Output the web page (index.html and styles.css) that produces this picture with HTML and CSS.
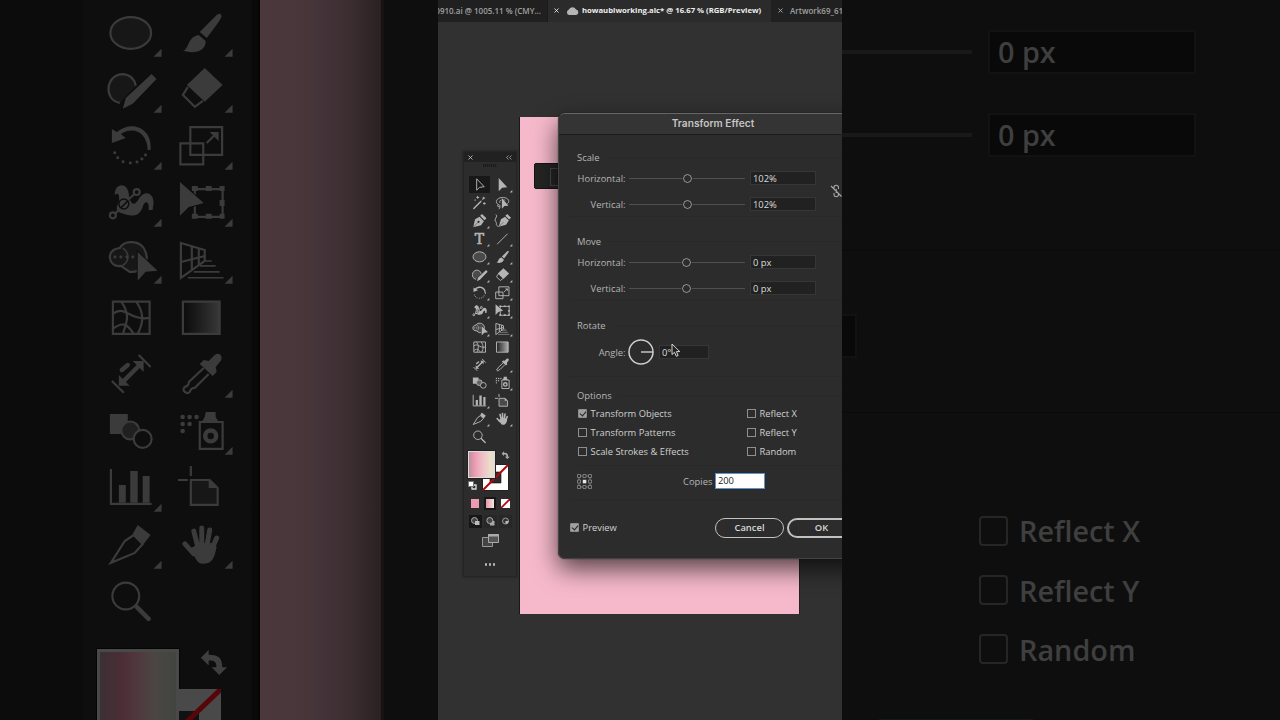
FILE: index.html
```
<!DOCTYPE html>
<html lang="en">
<head>
    <meta charset="UTF-8">
    <meta name="viewport" content="width=device-width, initial-scale=1.0">
    <title>Transform Effect</title>
    <link rel="stylesheet" href="styles.css">
</head>
<body>
    <!-- tool icons, shared by both toolbars -->
    <svg class="sprite" width="0" height="0">
        <defs>
            <linearGradient id="fade"><stop offset="0.1" stop-color="#000"/><stop offset="1" stop-color="#fff"/></linearGradient>
            <mask id="fadeMask"><rect x="16" y="11" width="40" height="36" fill="url(#fade)"/></mask>
        </defs>
        <symbol id="more" viewBox="0 0 72 57"><path class="f" d="M67 44v8h-8z"/></symbol>
        <symbol id="select" viewBox="0 0 72 57"><path class="s" d="M27 9v36l9-9 15-2z"/></symbol>
        <symbol id="direct" viewBox="0 0 72 57"><path class="f" d="M24 6v42l11-11 16-1z"/></symbol>
        <symbol id="wand" viewBox="0 0 72 57"><path class="s w" d="M18 46l22-22"/><path class="s" d="M30 6v9M26 11h9M49 9v8M45 13h9M51 26v8M47 30h9M22 17v5M43 20l3-3"/></symbol>
        <symbol id="lasso" viewBox="0 0 72 57"><path class="s" d="M24 34c-14-7-7-22 11-23 18-1 27 12 16 20M24 34c-5 0-6 7 0 6 6-1 4-6 0-6M28 39q2 6-4 8M28 28c-5-9 10-12 17-8"/><path class="f b" d="M34 13v34l8-9 13-1z"/></symbol>
        <symbol id="pen" viewBox="0 0 72 57"><path class="f" d="M16 48l6-25 14-8 14 14-9 13zM38 12l6-6 14 14-6 6z"/><path class="k" d="M17 47l15-15"/><circle class="bg" cx="33" cy="31" r="3.5"/></symbol>
        <symbol id="curve" viewBox="0 0 72 57"><path class="f" d="M24 47l7-24 13-8 12 12-9 13zM45 12l6-6 12 12-6 6z"/><path class="k" d="M25 46l14-14"/><path class="s" d="M15 8c8 6-8 15 0 23 5 6-4 10 9 15"/></symbol>
        <symbol id="line" viewBox="0 0 72 57"><path class="s" d="M19 45l33-33"/></symbol>
        <symbol id="ellipse" viewBox="0 0 72 57"><ellipse class="s t" cx="36" cy="28" rx="20.5" ry="16"/></symbol>
        <symbol id="brush" viewBox="0 0 72 57"><path class="f" d="M51 10q4-3 5 1q0 3-15 22l-7-6zM33 30l7 6c0 9-9 14-23 10 7-2 4-14 16-16z"/><path class="k" d="M32 27l10 9"/></symbol>
        <symbol id="blob" viewBox="0 0 72 57"><path class="s t" d="M25 42c-17-3-14-28 2-29 8 0 13 5 14 12"/><path class="f b" d="M57 13l5 5-24 25-10 5 3-11z"/></symbol>
        <symbol id="eraser" viewBox="0 0 72 57"><path class="f" d="M39 7l18 17-18 17-18-17z"/><path class="s" d="M22 26l-5 8 12 12 8-6"/></symbol>
        <symbol id="rotate" viewBox="0 0 72 57"><path class="f" d="M17 11v14l14-5-5-4c14-9 27 0 27 16h3c2-21-18-31-34-18z"/><path class="dots" d="M19.800 34.800h.1M22.800 39.800h.1M28.200 43.800h.1M35.500 45.200h.1M42.200 44.200h.1M47.200 41.200h.1M50.800 37.200h.1"/></symbol>
        <symbol id="scale" viewBox="0 0 72 57"><path class="s" d="M24.500 9h32v28h-32zM14.500 25.500h23v21h-23zM41 25l9-9"/><path class="f" d="M44 14h9v9z"/></symbol>
        <symbol id="width" viewBox="0 0 72 57"><path class="f" d="M20 20c-1-12 13-14 14-1 1 9 5 14 10 5 5-9 15-7 15 4l-1 7h-4c1-9-4-10-6-3-3 10-12 10-19 7-9-2-8-6-5-12 1-5 0-11-4-7z"/><path class="k" d="M19 40l23-23"/><path class="s" d="M19 40l7-7M32 26l10-9"/><circle class="s bgf" cx="18" cy="40.500" r="3"/><circle class="s bgf" cx="42" cy="17" r="3"/><circle class="k n" cx="29" cy="29" r="5"/></symbol>
        <symbol id="free" viewBox="0 0 72 57"><path class="s" d="M29 14h28v28H29z"/><path class="f" d="M26 11h6v5h-6zM40 11h6v5h-6zM54 11h5v5h-5zM54 25h5v6h-5zM54 39h5v5h-5zM40 39h6v5h-6zM26 39h6v5h-6z"/><path class="f b" d="M14 7v34l9-9 15-4z"/></symbol>
        <symbol id="builder" viewBox="0 0 72 57"><path class="s t" d="M25 16c5-9 22-8 26 4 4 12-5 21-16 20l-9-6c-13 2-16-17-1-18z"/><path class="s thin" d="M28 16c7 5 7 14-1 18"/><path class="dots" d="M20 25h.1M26 25h.1M32 25h.1M38 25h.1"/><path class="f b" d="M43 20v29l8-9 12-1z"/></symbol>
        <symbol id="persp" viewBox="0 0 72 57"><path class="s" d="M15 11l24 7v11L15 46zM15 30l24-6M26 14v24M33 16v17"/><path class="s thin" d="M38 29h8M34 34h16M28 40h26M22 46h36"/></symbol>
        <symbol id="mesh" viewBox="0 0 72 57"><path class="s" d="M18 12.500h37V45H18zM18 25c12-10 16 7 37 4M18 40c9-7 14-6 21 5M26 12c9 12 7 20 2 33M41 12c8 10 8 22 2 33"/></symbol>
        <symbol id="grad" viewBox="0 0 72 57"><rect class="f" x="17" y="12.500" width="37" height="32.500" mask="url(#fadeMask)"/><path class="s" d="M17 12.500h37V45H17z"/></symbol>
        <symbol id="measure" viewBox="0 0 72 57"><path class="s" d="M17 35l12 12M44 9l12 12"/><path class="s w" d="M27 37l19-19"/><path class="s w" d="M27 24l6-5"/><path class="f" d="M24 29v11h11zM38 15h11v11z"/></symbol>
        <symbol id="dropper" viewBox="0 0 72 57"><path class="f" d="M34 18l4-4 5 1 6-6c5-4 9 2 6 6l-5 6 1 5-4 4z"/><path class="s" d="M38 22L23 36q0 4-4 5c-4 4 2 8 5 5q1-4 5-4l14-14"/></symbol>
        <symbol id="blend" viewBox="0 0 72 57"><path class="f" d="M15 11h18v20H15z"/><circle class="s bgf" cx="35.500" cy="27.500" r="9"/><circle class="f h" cx="35.500" cy="27.500" r="9"/><circle class="s bgf" cx="48" cy="36" r="9"/></symbol>
        <symbol id="spray" viewBox="0 0 72 57"><path class="s" d="M34 19h23v27H34z"/><circle class="s w" cx="45" cy="33" r="5.500"/><path class="f" d="M40 9h10v5l3 5H36l3-5z"/><path class="dots big" d="M16.700 14h.1M23.700 14h.1M30.700 14h.1M16.700 21h.1M23.700 21h.1M16.700 28h.1"/></symbol>
        <symbol id="graph" viewBox="0 0 72 57"><path class="s" d="M16 9v35h41"/><path class="f" d="M24 25h7v18h-7zM35.500 11H43v32h-7.500zM48 16h7v27h-7z"/></symbol>
        <symbol id="artboard" viewBox="0 0 72 57"><path class="s" d="M12 20h10M25 6v10"/><path class="s t" d="M25 20h19l8 8v17H25z"/><path class="f" d="M43 19v9h9z"/></symbol>
        <symbol id="slice" viewBox="0 0 72 57"><path class="s" d="M16 46l14-22 9-6 9 9-8 9z"/><path class="f" d="M43 8l13 10-7 9-11-10z"/></symbol>
        <symbol id="hand" viewBox="0 0 72 57"><path class="f" d="M25 31l10-5h12l4 4c-2 10-4 17-14 17-6 0-8-7-12-16z"/><path class="finger" d="M19 27l9 10M28 14l4 16M36 11v18M44 13l-3 17M51 21l-6 14"/></symbol>
        <symbol id="zoom" viewBox="0 0 72 57"><circle class="s" cx="31" cy="23" r="13.500"/><path class="s w" d="M42 34l12 12"/></symbol>
        <symbol id="swap" viewBox="0 0 30 30"><path class="f" d="M2 9l8-8v5c11 0 14 4 14 13h5l-8 8-8-8h5c0-6-2-7-8-7v5z"/></symbol>
    </svg>

    <div class="screen">
        <!-- enlarged left side -->
        <div class="side side-left">
            <div class="big-toolbar">
                <div class="tools big-tools" id="bigTools"></div>
                <div class="big-swatches">
                    <div class="big-fill"></div>
                    <div class="big-right">
                        <svg class="big-swap" width="29" height="29"><use href="#swap"/></svg>
                        <svg class="big-none" width="42" height="42" viewBox="0 0 42 42"><path d="M0 0h42v42H0z" fill="#494949"/><path d="M0 22h20v20H0z" fill="#111"/><path d="M-4 44L42 0" stroke="#560508" stroke-width="5"/></svg>
                    </div>
                </div>
            </div>
            <div class="big-art"></div>
            <div class="big-edge"></div>
        </div>

        <!-- application window -->
        <div class="app">
            <div class="tabs">
                <div class="tab tab-first"><span class="name">0910.ai @ 1005.11 % (CMY...</span></div>
                <div class="tab active">
                    <svg class="x" viewBox="0 0 5 5"><path d="M.5.5l4 4M4.500.5l-4 4"/></svg>
                    <svg class="cloud" viewBox="0 0 13 9"><path d="M3 9a2.800 2.800 0 0 1-.3-5.300A4 4 0 0 1 10 3.500 2.800 2.800 0 0 1 10.200 9z" fill="#b5b5b5"/></svg>
                    <span class="name">howaubiworking.aic* @ 16.67 % (RGB/Preview)</span>
                </div>
                <div class="tab tab-last">
                    <svg class="x" viewBox="0 0 5 5"><path d="M.5.5l4 4M4.500.5l-4 4"/></svg>
                    <span class="name">Artwork69_61</span>
                </div>
            </div>

            <div class="canvas">
                <div class="artboard"></div>

                <div class="toolbar">
                    <div class="toolbar-head">
                        <svg class="x" viewBox="0 0 5 5"><path d="M.5.5l4 4M4.500.5l-4 4"/></svg>
                        <svg width="6" height="5" viewBox="0 0 6 5"><path d="M2.500.5l-2 2 2 2M5.500.5l-2 2 2 2" fill="none" stroke="#aaa" stroke-width=".8"/></svg>
                    </div>
                    <div class="grip"></div>
                    <div class="tools small-tools" id="smallTools"></div>
                    <div class="swatches">
                        <svg class="none" width="27" height="27" viewBox="0 0 27 27"><path d="M.5.5h26v26H.5z" fill="#fff" stroke="#222"/><path d="M8 8h11v11H8z" fill="#2c2c2c" stroke="#111" stroke-width=".6"/><path d="M1 26L26 1" stroke="#b3060c" stroke-width="2"/></svg>
                        <div class="fill"></div>
                        <svg class="swap" width="9" height="9"><use href="#swap"/></svg>
                        <svg class="default" width="9" height="9" viewBox="0 0 9 9"><path d="M4 4h4v4H4z" fill="none" stroke="#ddd" stroke-width="1.300"/><path d="M.5.5h5v5h-5z" fill="#fff" stroke="#777"/></svg>
                    </div>
                    <div class="modes">
                        <span class="mode"><i class="chip pink"></i></span>
                        <span class="mode on"><i class="chip blush"></i></span>
                        <span class="mode"><svg width="9" height="9" viewBox="0 0 9 9"><path d="M0 0h9v9H0z" fill="#fff"/><path d="M0 9L9 0" stroke="#b3060c" stroke-width="1.800"/></svg></span>
                    </div>
                    <div class="modes draw">
                        <span class="mode on"><svg width="9" height="9" viewBox="0 0 9 9"><circle cx="3.500" cy="3.500" r="3" fill="#444" stroke="#aaa"/><path d="M4 4h4.500v4H4z" fill="#bbb"/></svg></span>
                        <span class="mode"><svg width="9" height="9" viewBox="0 0 9 9"><path d="M4 4h4.500v4.500H4z" fill="#aaa"/><circle cx="3.800" cy="3.500" r="3" fill="#444" stroke="#aaa"/></svg></span>
                        <span class="mode"><svg width="9" height="9" viewBox="0 0 9 9"><circle cx="4.500" cy="4" r="3" fill="#333" stroke="#999"/><path d="M4.500 4h3a3 3 0 0 1-3 3z" fill="#bbb"/></svg></span>
                    </div>
                    <svg class="screens" width="17" height="13" viewBox="0 0 17 13"><path d="M.5 3.500h10v9H.5z" fill="#444" stroke="#999"/><path d="M6.500.5h10v8h-10z" fill="#555" stroke="#aaa"/><path d="M6 0h11v2.500H6z" fill="#aaa"/></svg>
                    <div class="ellipsis"><i></i><i></i><i></i></div>
                </div>

                <div class="control-bar"><i></i></div>

                <div class="dialog">
                    <div class="dialog-title">Transform Effect</div>
                    <div class="dialog-body">
                        <div class="group scale">
                            <div class="legend">Scale</div>
                            <div class="row"><label>Horizontal:</label><span class="slider"><i></i></span><span class="field">102%</span></div>
                            <div class="row"><label>Vertical:</label><span class="slider"><i></i></span><span class="field">102%</span></div>
                            <svg class="unlink" width="12" height="14" viewBox="0 0 12 14"><path d="M4 5V3.500a2 2 0 0 1 4.500 0V5M4 9v1.500a2 2 0 0 0 4.500 0V9M6.200 5v4M1 2l10.500 10.500" fill="none" stroke="#a6a6a6" stroke-width="1.100"/></svg>
                        </div>
                        <div class="group move">
                            <div class="legend">Move</div>
                            <div class="row"><label>Horizontal:</label><span class="slider"><i></i></span><span class="field">0 px</span></div>
                            <div class="row"><label>Vertical:</label><span class="slider"><i></i></span><span class="field">0 px</span></div>
                        </div>
                        <div class="group rotate">
                            <div class="legend">Rotate</div>
                            <div class="row">
                                <label>Angle:</label>
                                <svg class="dial" width="26" height="26" viewBox="0 0 26 26"><circle cx="13" cy="13" r="12" fill="none" stroke="#cfcfcf" stroke-width="1.500"/><path d="M13 13h12" stroke="#cfcfcf" stroke-width="1.400"/></svg>
                                <span class="field short">0°</span>
                            </div>
                        </div>
                        <div class="group options">
                            <div class="legend">Options</div>
                            <div class="checks">
                                <span class="check"><i class="box checked"></i>Transform Objects</span>
                                <span class="check"><i class="box"></i>Reflect X</span>
                                <span class="check"><i class="box"></i>Transform Patterns</span>
                                <span class="check"><i class="box"></i>Reflect Y</span>
                                <span class="check"><i class="box"></i>Scale Strokes &amp; Effects</span>
                                <span class="check"><i class="box"></i>Random</span>
                            </div>
                            <div class="copies">
                                <svg width="15" height="15" viewBox="0 0 15 15"><path d="M.5.5h3v3h-3zM6 .5h3v3H6zM11.500.5h3v3h-3zM.5 6h3v3h-3zM11.500 6h3v3h-3zM.5 11.500h3v3h-3zM6 11.500h3v3H6zM11.500 11.500h3v3h-3zM3.500 2H6M9 2h2.500M3.500 13H6M9 13h2.500M2 3.500V6M2 9v2.500M13 3.500V6M13 9v2.500" fill="none" stroke="#8c8c8c" stroke-width=".8"/><path d="M5.800 5.800h3.500v3.500H5.800z" fill="#e8e8e8"/></svg>
                                <label>Copies</label>
                                <span class="field focus">200</span>
                            </div>
                        </div>
                        <div class="buttons">
                            <span class="check"><i class="box checked"></i>Preview</span>
                            <span class="btn">Cancel</span>
                            <span class="btn ok">OK</span>
                        </div>
                    </div>
                </div>

                <svg class="cursor" width="10" height="15" viewBox="0 0 10 15"><path d="M1 1v10.500l2.500-2.200 1.800 4 1.800-.8-1.700-3.900h3.400z" fill="#222" stroke="#e6e6e6" stroke-width=".9"/></svg>
            </div>
        </div>

        <!-- enlarged right side -->
        <div class="side side-right">
            <div class="big-row"><i class="track"></i><span class="big-field">0 px</span></div>
            <div class="big-row"><i class="track"></i><span class="big-field">0 px</span></div>
            <div class="big-rotate"><span class="angle"></span></div>
            <div class="big-options">
                <span class="big-check"><i></i>Reflect X</span>
                <span class="big-check"><i></i>Reflect Y</span>
                <span class="big-check"><i></i>Random</span>
            </div>
            <div class="big-copies"></div>
        </div>
    </div>

    <script>
        // a star after the name means the tool has a flyout
        const first = ['select', 'direct*', 'wand', 'lasso', 'pen*', 'curve', 'type*', 'line*'];
        const rest = ['ellipse*', 'brush*', 'blob*', 'eraser*', 'rotate*', 'scale*', 'width*', 'free*',
            'builder*', 'persp*', 'mesh', 'grad', 'measure', 'dropper*', 'blend', 'spray*',
            'graph*', 'artboard', 'slice*', 'hand*', 'zoom'];

        function drawTools(id, list) {
            document.getElementById(id).innerHTML = list.map(item => {
                const name = item.replace('*', '');
                const more = item.endsWith('*') ? '<use href="#more"/>' : '';
                const icon = name === 'type'
                    ? '<text class="letter" x="36" y="45" text-anchor="middle">T</text>'
                    : `<use href="#${name}"/>`;
                return `<svg class="tool tool-${name}" viewBox="0 0 72 57">${icon}${more}</svg>`;
            }).join('');
        }

        drawTools('bigTools', rest);
        drawTools('smallTools', first.concat(rest));
    </script>
</body>
</html>
```
FILE: styles.css
```
* { box-sizing: border-box; }
body { margin: 0; background: #0e0e0e; font-family: "Open Sans", "Noto Sans", sans-serif; }
.sprite { position: absolute; }
.screen { display: flex; width: 1280px; height: 720px; overflow: hidden; }

/* icon parts */
.f { fill: currentColor; }
.h { fill-opacity: .4; }
.s { fill: none; stroke: currentColor; stroke-width: var(--line); }
.t { fill: currentColor; fill-opacity: .22; }
.w { stroke-width: 4.5; stroke-linecap: round; }
.thin { stroke-width: 1.6; }
.b { stroke: var(--bg); stroke-width: 2; paint-order: stroke; }
.k { stroke: var(--bg); stroke-width: 1.5; }
.n { fill: none; }
.bg, .bgf { fill: var(--bg); }
.dots { stroke: currentColor; stroke-width: 3; stroke-linecap: round; }
.big { stroke-width: 4.5; }
.finger { fill: none; stroke: currentColor; stroke-width: 5; stroke-linecap: round; }
.letter { fill: currentColor; font: 44px "DejaVu Serif", serif; stroke: currentColor; stroke-width: 2; }
.tools { display: grid; }
.tool { display: block; width: 100%; height: 100%; }

/* left side */
.side { width: 438px; height: 720px; overflow: hidden; background: #0e0e0e; flex: none; }
.side-left { display: flex; }
.big-toolbar { width: 260px; padding: 4.500px 22px 0 94.500px; border-right: 2px solid #060606; background: linear-gradient(90deg, #0c0c0c 82px, #0e0e0e 84px, #0e0e0e 250px, #090909 253px); }
.big-tools { --bg: #0e0e0e; --line: 2.2; color: #3b3b3b; grid-template-columns: 71.5px 71.5px; grid-auto-rows: 56.9px; }
.big-swatches { display: flex; padding: 18.500px 0 0 2.500px; }
.big-fill { width: 82px; height: 84px; flex: none; border: 3px solid #494949; outline: 1px solid #050505; background: linear-gradient(90deg, #3a3035, #4b2d35 28%, #50393e 50%, #4b4643 72%, #414540); }
.big-right { color: #3f3f3f; }
.big-swap { display: block; margin: 0 0 11px 20px; }
.big-none { display: block; }
.big-art { width: 121px; background: linear-gradient(90deg, #4b383c, #49363a 30%, #45343a 48%, #3b2e30 75%, #2b2022); }
.big-edge { width: 3px; background: #171315; }

/* app window */
.app { width: 404px; height: 720px; overflow: hidden; flex: none; display: flex; flex-direction: column; background: #313131; }
.tabs { display: flex; height: 22px; flex: none; background: #202020; font-size: 8px; color: #a0a0a0; }
.tab { display: flex; align-items: center; flex: none; white-space: nowrap; font-weight: 600; padding-bottom: 1px; }
.tab .name { margin-top: -1px; }
.tab-first { width: 110px; justify-content: flex-end; padding-right: 6px; overflow: hidden; border-right: 1px solid #1b1b1b; }
.tab.active { width: 223px; padding-left: 6px; background: #2b2b2b; color: #eee; font-weight: 700; font-size: 7.730px; }
.tab-last { padding-left: 7px; }
.tab-last .name { margin-left: 7px; }
.x { width: 5px; height: 5px; fill: none; stroke: #bbb; stroke-width: .8; }
.active .x { stroke: #fff; }
.cloud { width: 13px; height: 9px; margin: 0 3px 0 7px; }
.canvas { position: relative; flex: 1; }
.artboard { position: absolute; left: 82px; top: 95px; width: 279px; height: 497px; background: #f6b9cc; box-shadow: -1px 0 0 #181818, 1px 0 0 #222; }

.toolbar { position: absolute; left: 25px; top: 129px; width: 54px; height: 426px; background: #2c2c2c; border: 1px solid #252525; box-shadow: 0 0 2px #1c1c1c; }
.toolbar-head { display: flex; justify-content: space-between; align-items: center; height: 10px; padding: 0 4px; background: #212121; }
.toolbar-head .x { stroke: #ccc; }
.grip { width: 14px; height: 3px; margin: 2px auto 9px; background: repeating-linear-gradient(90deg, #1c1c1c 0 1px, #272727 1px 2px); }
.small-tools { --bg: #2c2c2c; --line: 3; color: #b4b4b4; grid-template-columns: 23px 23px; grid-auto-rows: 18px; padding-left: 3.500px; }
.tool-select { --bg: #181818; background: linear-gradient(#181818, #181818) 1px 0 / 21px 17px no-repeat; }
.swatches { position: relative; height: 51px; color: #aaa; }
.fill { position: absolute; left: 4px; top: 5px; width: 27px; height: 27px; border: 1px solid #ddd; outline: 1px solid #222; background: linear-gradient(90deg, #bb8f9d, #ee9db3 25%, #efbcc5 50%, #ecdccd 85%, #e2dfca); }
.none { position: absolute; left: 18px; top: 18px; }
.swap { position: absolute; left: 37px; top: 5px; }
.default { position: absolute; left: 4px; top: 35px; }
.modes { display: flex; justify-content: center; gap: 3px; }
.mode { display: flex; align-items: center; justify-content: center; width: 12px; height: 13px; }
.mode.on { background: #171717; }
.chip { width: 8px; height: 9px; background: #ec9bb3; }
.blush { background: linear-gradient(90deg, #eb96ad, #f5e5dc); }
.draw { margin-top: 5px; gap: 2px; }
.draw .mode { width: 13px; background: #272727; }
.draw .mode.on { background: #171717; }
.screens { display: block; margin: 6px auto 0; }
.ellipsis { display: flex; justify-content: center; gap: 1.500px; margin-top: 16px; }
.ellipsis i { width: 2.500px; height: 2.500px; border-radius: 50%; background: #b8b8b8; }

.control-bar { position: absolute; left: 96px; top: 141px; width: 40px; height: 26px; padding: 4px 0 0 15px; background: #242424; border: 1px solid #151515; border-radius: 2px; }
.control-bar i { display: block; width: 20px; height: 18px; border: 1px solid #484848; }

/* dialog */
.dialog { position: absolute; left: 120px; top: 91px; width: 310px; height: 446px; background: #2c2c2c; border: 1px solid #444; border-top-color: #666; border-radius: 7px; box-shadow: 0 0 1px #000, 0 10px 24px rgba(0, 0, 0, .65); font-size: 9.400px; font-weight: 500; color: #b5b5b5; }
.dialog-title { height: 21px; line-height: 19px; text-align: center; background: #343434; border-bottom: 1px solid #1d1d1d; border-radius: 6px 6px 0 0; font-family: Inter, sans-serif; font-size: 10.200px; font-weight: 600; color: #c4c4c4; }
.dialog-body { padding: 16px 12px 0 10px; }
.group { position: relative; padding-left: 8px; border-bottom: 1px solid #292929; height: 84px; }
.legend { height: 13px; line-height: 13px; display: flex; gap: 6px; align-items: center; }
.legend::after { content: ""; flex: 1; border-top: 1px solid #292929; }
.row { display: flex; align-items: center; height: 26px; }
.scale .row:nth-child(2), .move .row:nth-child(2) { margin-top: 1px; }
.row label { width: 48.500px; margin-right: .5px; text-align: right; white-space: nowrap; }
.slider { width: 116px; height: 1px; margin: 0 5px 0 3px; background: #505050; display: flex; align-items: center; }
.slider i { width: 9px; height: 9px; margin-left: 54px; flex: none; border: 1.500px solid #a5a5a5; border-radius: 50%; background: #2c2c2c; outline: 1px solid #2c2c2c; }
.move .slider i { margin-left: 53px; }
.field { width: 66px; height: 14px; line-height: 13px; padding-left: 2px; background: #212121; border: 1px solid #363636; color: #dcdcdc; }
.unlink { position: absolute; left: 261px; top: 33px; }
.scale, .move { height: 66px; margin-bottom: 18px; }
.rotate { height: 58px; margin-bottom: 12px; }
.rotate .row { margin-top: 7px; }
.dial { margin: 0 5px 0 2px; }
.short { width: 50px; }
.options { height: 112px; }
.checks { display: grid; grid-template-columns: 169px 1fr; grid-auto-rows: 19px; margin-top: 2px; padding-left: 1px; }
.check { display: flex; align-items: center; color: #d0d0d0; white-space: nowrap; }
.box { width: 9px; height: 9px; margin-right: 3.500px; border: 1px solid #8f8f8f; flex: none; }
.box.checked { border-radius: 1px; background: #a0a0a0; }
.box.checked::after { content: ""; display: block; width: 3px; height: 5px; margin: 0 0 0 2px; border: solid #222; border-width: 0 1.200px 1.200px 0; transform: rotate(40deg); }
.copies { display: flex; align-items: center; height: 31px; border-top: 1px solid #292929; margin-top: 4px; }
.copies label { margin: 0 2.500px 0 91px; }
.field.focus { width: 50px; height: 16px; line-height: 14px; background: #fff; border-color: #5e93c8; color: #222; }
.buttons { display: flex; align-items: center; height: 20px; margin-top: 17px; padding-left: 1px; white-space: nowrap; }
.buttons .check { width: 145px; flex: none; margin-top: -2px; }
.btn { width: 69px; height: 20px; line-height: 17px; margin-right: 3px; text-align: center; flex: none; border: 1px solid #c2c2c2; border-radius: 10px; color: #d8d8d8; font-weight: 600; }
.ok { border-width: 2px; line-height: 15px; }
.cursor { position: absolute; left: 233px; top: 321px; }

/* right side */
.side-right { padding-top: 10px; color: #3f3f3f; font-size: 28.800px; font-weight: 600; }
.big-row { display: flex; align-items: center; height: 83px; }
.big-row .track { width: 130px; height: 4px; background: #191919; }
.big-field { width: 208px; height: 44px; line-height: 40px; margin-left: 16px; padding-left: 8px; background: #090909; border: 2px solid #121212; }
.big-rotate { margin-top: 74px; height: 163px; padding-top: 63px; border-top: 1px solid #0a0a0a; border-bottom: 1px solid #0a0a0a; }
.angle { display: block; width: 15px; height: 44px; background: #090909; border: 2px solid #121212; border-left: 0; }
.big-options { display: flex; flex-direction: column; margin-top: 88px; padding-left: 137px; }
.big-check { display: flex; align-items: center; height: 59.400px; }
.big-check i { width: 29px; height: 30px; margin-right: 11px; border: 2px solid #262626; border-radius: 4px; }
.big-copies { width: 154px; height: 10px; margin: 40px 0 0 37px; border-top: 1px solid #101b1c; }
```
